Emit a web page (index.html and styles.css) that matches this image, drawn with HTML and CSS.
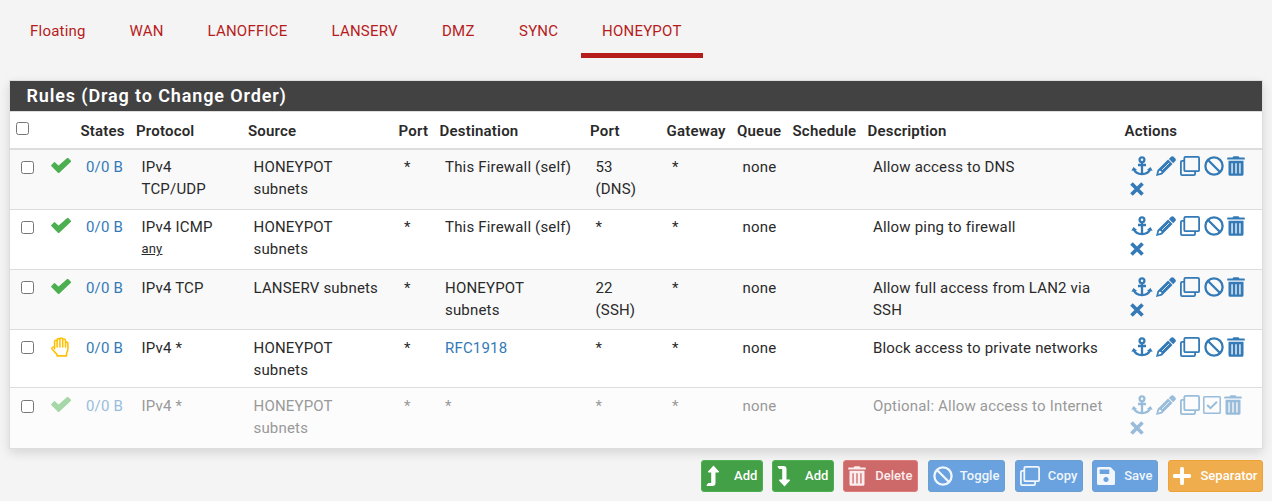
FILE: index.html
```html
<!DOCTYPE html>
<html lang="en">
<head>
<meta charset="utf-8">
<title>Firewall Rules</title>
<link rel="stylesheet" href="styles.css">
</head>
<body>
<svg class="defs" width="0" height="0" aria-hidden="true">
  <symbol id="check" viewBox="0 0 20 15"><path d="M.7 7.600 3.500 4.700 7.500 8.400 16.700.4 19.500 3.200 7.600 14.500Z" fill="currentColor" stroke="currentColor" stroke-width="1.300" stroke-linejoin="round"/></symbol>
  <symbol id="hand" viewBox="0 0 18 20"><path d="M3.6 11.8V4.8c0-2 2.5-2 2.5 0V3.2c0-2.1 2.8-2.1 2.8 0V2.7c0-2.2 2.8-2.2 2.8 0v.9c0-2.1 2.8-2.1 2.8 0v3c0-2 2.4-2 2.4 0v5.200c0 1.800-.9 3-1.400 4.900v2.200H6.100v-1.300L1.300 12.300c-1-1.500.9-3.400 2.300-1.700zM6.100 4v6M8.900 3v7M11.700 3v7M14.500 5.500V10" fill="none" stroke="currentColor" stroke-width="1.600" stroke-linejoin="round" stroke-linecap="round"/></symbol>
  <symbol id="anchor" viewBox="0 0 22 20"><g fill="none" stroke="currentColor" stroke-width="2.300"><circle cx="11" cy="3.700" r="2.400"/><path d="M11 6V18M7 9h8M2.800 13.200c1.200 3.300 4.200 4.900 8.200 4.900s7-1.600 8.200-4.900"/></g><path d="M.3 14.700 2.500 11l3.700 2.900ZM21.700 14.700 19.500 11l-3.700 2.900Z" fill="currentColor"/></symbol>
  <symbol id="pencil" viewBox="0 0 20 20"><path fill="currentColor" fill-rule="evenodd" d="M15 .8c.8-.8 1.900-.8 2.700 0l1.600 1.600c.8.8.8 1.900 0 2.700l-2.100 2.100-4.300-4.300ZM12.100 3.500l4.400 4.400L6 18.600 0 20l1.500-6ZM3.200 14.700 2.300 17.700l3-.9v-1.900Z"/><path d="m6 14 7.200-7.200" stroke="#fff" stroke-width=".8"/></symbol>
  <symbol id="clone" viewBox="0 0 20 20"><g fill="none" stroke="currentColor" stroke-width="1.800"><rect x="4.300" y=".9" width="14.800" height="14.300" rx="1.300"/><path d="M4.300 4.800H2.200Q.9 4.800.9 6.100v11.700q0 1.300 1.300 1.300h11.600q1.300 0 1.300-1.300v-2.600"/></g></symbol>
  <symbol id="ban" viewBox="0 0 20 20"><g fill="none" stroke="currentColor" stroke-width="2.300"><circle cx="10" cy="10" r="8.600"/><path d="m4 4 12 12"/></g></symbol>
  <symbol id="trash" viewBox="0 0 18 20"><path fill="currentColor" fill-rule="evenodd" d="M.8 1.400H5.500L6.500.2h5L12.500 1.400h4.700q.6 0 .6.700v1.300H.2V2.100q0-.7.600-.7ZM1.500 4.800h15v13.400q0 1.600-1.600 1.600H3.100q-1.600 0-1.600-1.600ZM4.400 7.200v10.300h1.300V7.200ZM8.350 7.200v10.300h1.300V7.200ZM12.300 7.200v10.300h1.300V7.200Z"/></symbol>
  <symbol id="times" viewBox="0 0 14 14"><path d="m1.500 1.500 11 11M12.500 1.500l-11 11" stroke="currentColor" stroke-width="3.700"/></symbol>
  <symbol id="checkbox" viewBox="0 0 18 18"><g fill="none" stroke="currentColor"><rect x=".8" y=".8" width="16.400" height="16.400" rx=".8" stroke-width="1.500"/><path d="m4.200 9 3.300 3.200 6.400-6.500" stroke-width="2"/></g></symbol>
  <symbol id="turnup" viewBox="0 0 14 22"><path fill="currentColor" d="M7.500.5 13 6.500q.3.900-.8 1H9.500V18q0 3-3 3H1.200q-.7 0-.7-.7L2.200 18h3V7.500H2.800q-1.100-.1-.8-1Z"/></symbol>
  <symbol id="save" viewBox="0 0 18 18"><path fill="currentColor" fill-rule="evenodd" d="M1.600 0h11.800L18 4.600v11.800q0 1.600-1.600 1.600H1.600Q0 18 0 16.400V1.600Q0 0 1.600 0ZM2.700 2.600V7h9.600V2.600ZM9 9.900a2.600 2.600 0 1 0 .01 0Z"/></symbol>
  <symbol id="plus" viewBox="0 0 18 18"><path d="M9 1.800v14.400M1.800 9h14.400" stroke="currentColor" stroke-width="3.900" stroke-linecap="round"/></symbol>
</svg>

<nav class="tabs">
  <a class="tab floating">Floating</a><a class="tab wan">WAN</a><a class="tab office">LANOFFICE</a><a class="tab serv">LANSERV</a><a class="tab dmz">DMZ</a><a class="tab sync">SYNC</a><a class="tab honeypot active">HONEYPOT</a>
</nav>

<section class="panel">
  <h2 class="title">Rules (Drag to Change Order)</h2>
  <table class="rules">
    <colgroup><col class="c-box"><col class="c-icon"><col class="c-states"><col class="c-proto"><col class="c-source"><col class="c-port"><col class="c-dest"><col class="c-dport"><col class="c-gate"><col class="c-queue"><col class="c-sched"><col class="c-desc"><col class="c-act"></colgroup>
    <thead>
      <tr><th><input type="checkbox"></th><th></th><th>States</th><th>Protocol</th><th>Source</th><th>Port</th><th>Destination</th><th>Port</th><th>Gateway</th><th>Queue</th><th>Schedule</th><th>Description</th><th>Actions</th></tr>
    </thead>
    <tbody>
      <tr class="odd">
        <td><input type="checkbox"></td><td class="state pass"><svg class="i-check"><use href="#check"/></svg></td><td><a class="link">0/0 B</a></td><td>IPv4<br>TCP/UDP</td><td>HONEYPOT<br>subnets</td><td>*</td><td>This Firewall (self)</td><td>53<br>(DNS)</td><td>*</td><td>none</td><td></td><td>Allow access to DNS</td>
        <td><div class="actions"><svg class="i-anchor"><use href="#anchor"/></svg><svg class="i-20"><use href="#pencil"/></svg><svg class="i-20"><use href="#clone"/></svg><svg class="i-20"><use href="#ban"/></svg><svg class="i-trash"><use href="#trash"/></svg><svg class="i-times"><use href="#times"/></svg></div></td>
      </tr>
      <tr>
        <td><input type="checkbox"></td><td class="state pass"><svg class="i-check"><use href="#check"/></svg></td><td><a class="link">0/0 B</a></td><td>IPv4 ICMP<br><u class="any">any</u></td><td>HONEYPOT<br>subnets</td><td>*</td><td>This Firewall (self)</td><td>*</td><td>*</td><td>none</td><td></td><td>Allow ping to firewall</td>
        <td><div class="actions"><svg class="i-anchor"><use href="#anchor"/></svg><svg class="i-20"><use href="#pencil"/></svg><svg class="i-20"><use href="#clone"/></svg><svg class="i-20"><use href="#ban"/></svg><svg class="i-trash"><use href="#trash"/></svg><svg class="i-times"><use href="#times"/></svg></div></td>
      </tr>
      <tr class="odd low">
        <td><input type="checkbox"></td><td class="state pass"><svg class="i-check"><use href="#check"/></svg></td><td><a class="link">0/0 B</a></td><td>IPv4 TCP</td><td>LANSERV subnets</td><td>*</td><td>HONEYPOT<br>subnets</td><td>22<br>(SSH)</td><td>*</td><td>none</td><td></td><td>Allow full access from LAN2 via<br>SSH</td>
        <td><div class="actions"><svg class="i-anchor"><use href="#anchor"/></svg><svg class="i-20"><use href="#pencil"/></svg><svg class="i-20"><use href="#clone"/></svg><svg class="i-20"><use href="#ban"/></svg><svg class="i-trash"><use href="#trash"/></svg><svg class="i-times"><use href="#times"/></svg></div></td>
      </tr>
      <tr class="short low">
        <td><input type="checkbox"></td><td class="state block"><svg class="i-hand"><use href="#hand"/></svg></td><td><a class="link">0/0 B</a></td><td>IPv4 *</td><td>HONEYPOT<br>subnets</td><td>*</td><td><a class="link">RFC1918</a></td><td>*</td><td>*</td><td>none</td><td></td><td>Block access to private networks</td>
        <td><div class="actions"><svg class="i-anchor"><use href="#anchor"/></svg><svg class="i-20"><use href="#pencil"/></svg><svg class="i-20"><use href="#clone"/></svg><svg class="i-20"><use href="#ban"/></svg><svg class="i-trash"><use href="#trash"/></svg></div></td>
      </tr>
      <tr class="odd low disabled">
        <td><input type="checkbox"></td><td class="state pass"><svg class="i-check"><use href="#check"/></svg></td><td><a class="link">0/0 B</a></td><td>IPv4 *</td><td>HONEYPOT<br>subnets</td><td>*</td><td>*</td><td>*</td><td>*</td><td>none</td><td></td><td>Optional: Allow access to Internet</td>
        <td><div class="actions"><svg class="i-anchor"><use href="#anchor"/></svg><svg class="i-20"><use href="#pencil"/></svg><svg class="i-20"><use href="#clone"/></svg><svg class="i-checkbox"><use href="#checkbox"/></svg><svg class="i-trash"><use href="#trash"/></svg><svg class="i-times"><use href="#times"/></svg></div></td>
      </tr>
    </tbody>
  </table>
</section>

<div class="buttons">
  <button class="btn green add"><svg class="b-turn"><use href="#turnup"/></svg>Add</button>
  <button class="btn green add"><svg class="b-turn flip"><use href="#turnup"/></svg>Add</button>
  <button class="btn red delete"><svg class="b-trash"><use href="#trash"/></svg>Delete</button>
  <button class="btn blue toggle"><svg class="b-20"><use href="#ban"/></svg>Toggle</button>
  <button class="btn blue copy"><svg class="b-20"><use href="#clone"/></svg>Copy</button>
  <button class="btn blue save"><svg class="b-18"><use href="#save"/></svg>Save</button>
  <button class="btn orange separator"><svg class="b-18"><use href="#plus"/></svg>Separator</button>
</div>
</body>
</html>
```
FILE: styles.css
```css
* { box-sizing: border-box; }
body { margin: 0; height: 501px; overflow: hidden; background: #f4f4f4; color: #2a2a2a; font: 400 15px/22px Roboto, sans-serif; letter-spacing: .18px; }
.defs { display: block; height: 0; }
svg { flex: none; display: block; overflow: visible; }

.tabs { display: flex; height: 58px; padding-left: 9px; margin-bottom: 22px; letter-spacing: .22px; }
.tab { flex: none; height: 58px; padding: 20px 0 0 21px; color: #b71c1c; }
.floating { width: 99.5px; }
.wan { width: 78px; }
.office { width: 124px; }
.serv { width: 110.5px; }
.dmz { width: 77px; }
.sync { width: 83px; }
.honeypot { width: 122px; }
.active { border-bottom: 5px solid #b71c1c; }

.panel { margin: 0 9px; height: 369px; border: 1px solid #ddd; background: #fff; box-shadow: 0 4px 10px rgba(0,0,0,.12); }
.title { margin: 0; height: 30px; padding: 0 16.5px; background: #424242; color: #fff; font-size: 18px; line-height: 30px; font-weight: 600; letter-spacing: .87px; }

.rules { width: 1252px; table-layout: fixed; border-collapse: separate; border-spacing: 0; }
.c-box { width: 35px; } .c-icon { width: 30px; } .c-states { width: 55.5px; } .c-proto { width: 112px; }
.c-source { width: 150.5px; } .c-port { width: 41px; } .c-dest { width: 150.5px; } .c-dport { width: 76.5px; }
.c-gate { width: 70.5px; } .c-queue { width: 55.5px; } .c-sched { width: 75px; } .c-desc { width: 257px; } .c-act { width: 143px; }
th { height: 39px; padding: 8px 0 6px 5.5px; vertical-align: top; text-align: left; font-weight: 600; letter-spacing: .2px; border-top: 1px solid #ddd; border-bottom: 2px solid #ddd; white-space: nowrap; }
td { height: 60px; padding: 6px 0 0 11px; vertical-align: top; border-bottom: 1px solid #ddd; white-space: nowrap; }
.low td { padding-top: 7px; }
.short td { height: 58px; }
.odd td { background: #f9f9f9; }
tr:last-child td { border-bottom: 0; }
.disabled td { background: #fcfcfc; color: #999; }
input { display: block; width: 13px; height: 13px; margin: 5px 0 0; }
.low input { margin-top: 4px; }
.disabled input { margin-top: 5px; }
th input { margin: 2px 0 0 .5px; }
.link { color: #337ab7; }
.disabled .link { color: #99bcdb; }
.any { font-size: 13px; position: relative; top: -1px; }
.rules .state { padding-left: 5.5px; }
.pass { color: #4caf50; }
.disabled .pass { color: #a5d7a7; }
.block { color: #ffc107; }
.i-check { width: 20px; height: 15px; margin-top: 2px; }
.low .i-check { margin-top: 2px; }
.i-hand { width: 18px; height: 20px; margin-top: -.5px; }

.actions { display: flex; flex-wrap: wrap; width: 120px; column-gap: 4px; row-gap: 6.5px; color: #337ab7; margin-top: -.5px; margin-left: .5px; }
.disabled .actions { color: #99bcdb; }
.i-anchor { width: 22px; height: 20px; }
.i-20 { width: 20px; height: 20px; }
.i-anchor + .i-20 { margin-left: -.5px; }
.i-trash { width: 18px; height: 20px; margin-left: -1px; }
.i-checkbox { width: 18px; height: 18px; margin: 1px 0 0 -1px; }
.i-times { width: 14px; height: 14px; margin-left: -.5px; }

.buttons { display: flex; justify-content: flex-end; gap: 9px; margin: 11px 9px 0 0; }
.btn { flex: none; display: flex; align-items: center; justify-content: space-between; height: 32px; padding: 0 4.5px 0 4px; border: 1px solid; border-radius: 3px; color: #fff; font: 500 13px/20px Roboto, sans-serif; letter-spacing: .05px; }
.green { background: #43a047; border-color: #4caf50; }
.red { background: #ce696a; border-color: #df7b7a; color: #f9eded; }
.blue { background: #69a2df; border-color: #6c9fcf; color: #f0f6fc; }
.orange { background: #f0ad4e; border-color: #eea236; }
.add { width: 62px; } .delete { width: 75px; } .toggle { width: 77px; } .copy { width: 68px; } .save { width: 66px; } .separator { width: 95px; }
.toggle, .copy, .separator { margin-left: 1px; }
.b-turn { width: 14px; height: 22px; }
.flip { transform: scaleY(-1); }
.b-trash { width: 18px; height: 20px; }
.b-20 { width: 20px; height: 20px; }
.b-18 { width: 18px; height: 18px; }
```
